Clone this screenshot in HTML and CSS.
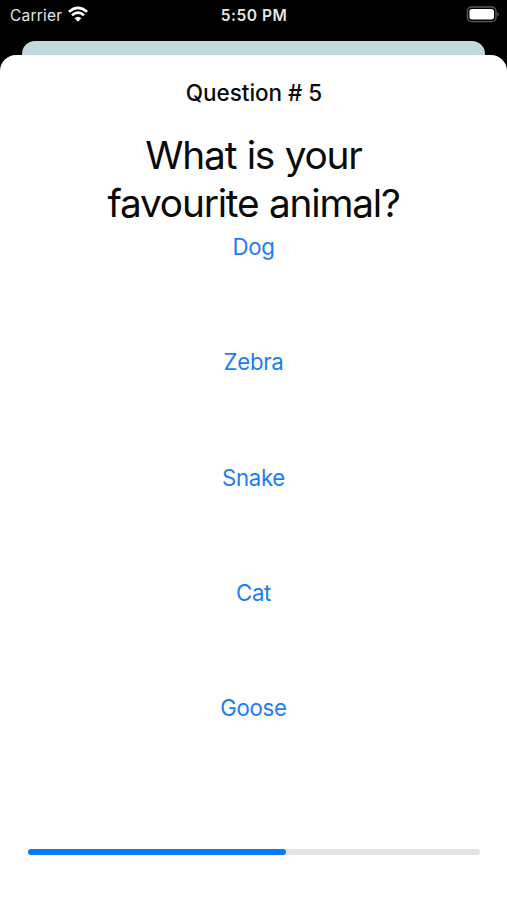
FILE: index.html
```html
<!DOCTYPE html>
<html lang="en">
<head>
<meta charset="utf-8">
<title>Question 5</title>
<link rel="stylesheet" href="styles.css">
</head>
<body>
<div class="screen">
  <header class="status">
    <div class="status-left">
      <span class="carrier">Carrier</span>
      <svg class="wifi" width="20" height="16" viewBox="0 0 20 16">
        <path d="M0.9 5.8Q10 -2 19.1 5.8M4 9.3Q10 4.1 16 9.3" fill="none" stroke="#fff" stroke-width="2.7"/>
        <path d="M6.6 12.3Q10 9.2 13.4 12.3L10 15.8Z" fill="#fff"/>
      </svg>
    </div>
    <span class="time">5:50 PM</span>
    <div class="status-right">
      <svg width="34" height="17" viewBox="0 0 34 17">
        <rect x="1.4" y="1" width="28.6" height="14.6" rx="4.3" fill="none" stroke="#59595b" stroke-width="1.4"/>
        <rect x="3.4" y="3" width="24.6" height="10.6" rx="2.5" fill="#fff"/>
        <path d="M31.4 6Q33 6.8 33 8.3T31.4 10.6Z" fill="#59595b"/>
      </svg>
    </div>
  </header>
  <div class="back-card"></div>
  <main class="sheet">
    <h2 class="title">Question # 5</h2>
    <h1 class="question">What is your<br>favourite animal?</h1>
    <nav class="answers">
      <a class="answer dog">Dog</a>
      <a class="answer zebra">Zebra</a>
      <a class="answer snake">Snake</a>
      <a class="answer cat">Cat</a>
      <a class="answer goose">Goose</a>
    </nav>
    <div class="progress"><div class="progress-fill"></div></div>
  </main>
</div>
</body>
</html>
```
FILE: styles.css
```css
* { box-sizing: border-box; }
body {
  margin: 0;
  background: #000;
  font-family: Inter, "Liberation Sans", sans-serif;
}
.screen {
  width: 507px;
  height: 900px;
  display: flex;
  flex-direction: column;
  overflow: hidden;
  background: #000;
}
.status {
  height: 41px;
  flex: none;
  display: grid;
  grid-template-columns: 1fr auto 1fr;
  align-items: start;
  padding: 6px 7px 0 10px;
  color: #e6e6e6;
  font-size: 15.5px;
  line-height: 19px;
}
.status-left { display: flex; gap: 6px; }
.carrier { letter-spacing: 0.2px; }
.time { margin-left: -2px; font-weight: 600; letter-spacing: 0.5px; }
.status-right { display: flex; justify-content: flex-end; }
.back-card {
  flex: none;
  height: 30px;
  margin: 0 22px -16px;
  border-radius: 13px 13px 0 0;
  background: #c0d8de;
}
.sheet {
  flex: 1;
  display: flex;
  flex-direction: column;
  border-radius: 16px 16px 0 0;
  background: #fff;
}
.title {
  margin: 24px 0 0 1px;
  text-align: center;
  font-size: 22.5px;
  line-height: 28px;
  font-weight: 550;
  letter-spacing: -0.05px;
  color: #0a0a0a;
}
.question {
  margin: 24px 0 1px;
  text-align: center;
  font-size: 38.8px;
  line-height: 48px;
  font-weight: 400;
  letter-spacing: -1.2px;
  word-spacing: 0.8px;
  color: #0a0a0a;
}
.answers { display: flex; flex-direction: column; align-items: center; }
.answer {
  height: 115.2px;
  padding-top: 5.2px;
  font-size: 22.2px;
  line-height: 28px;
  letter-spacing: -0.3px;
  color: #1a7df5;
}
.progress {
  height: 6px;
  margin: 45px 27px 0 28px;
  border-radius: 3px;
  background: #e3e3e4;
}
.progress-fill {
  width: 57.1%;
  height: 100%;
  border-radius: 3px;
  background: #087aff;
}
```
